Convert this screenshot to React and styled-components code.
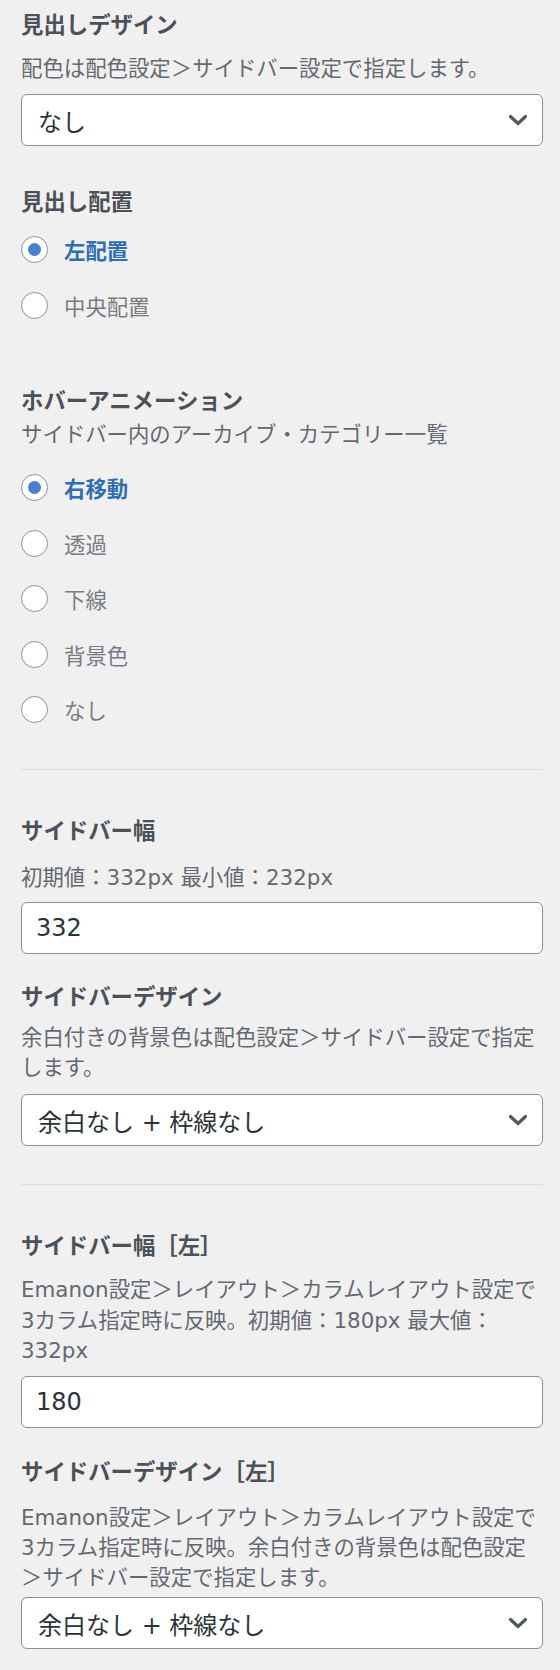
import React from "react";
import styled, { createGlobalStyle } from "styled-components";

const GlobalStyle = createGlobalStyle`
  html, body {
    margin: 0;
    padding: 0;
    background: #f0f0f1;
  }
  body {
    font-family: "DejaVu Sans", "Noto Sans CJK JP", sans-serif;
    color: #50575e;
  }
`;

const Panel = styled.div`
  width: 560px;
  box-sizing: border-box;
  padding: 10px 17px 20px 21px;
  display: flex;
  flex-direction: column;
`;

const Title = styled.div`
  margin-top: ${(p) => p.$mt || 0}px;
  font-size: 22.4px;
  line-height: 30px;
  font-weight: 700;
  color: #4b5157;
`;

const Desc = styled.div`
  margin-top: ${(p) => p.$mt || 0}px;
  font-size: 21.4px;
  line-height: ${(p) => p.$lh || 30}px;
  color: #646970;
`;

const Field = styled.div`
  margin-top: ${(p) => p.$mt || 0}px;
  height: 52px;
  box-sizing: border-box;
  display: flex;
  align-items: center;
  justify-content: space-between;
  padding: 0 14px 0 ${(p) => (p.$select ? 16 : 14)}px;
  background: #fff;
  border: 1.4px solid #8c8f94;
  border-radius: 6px;
  font-size: 24px;
  color: #2c3338;
`;

const Chevron = () => (
  <svg width="20" height="12" viewBox="0 0 20 12">
    <polyline
      points="2.5,2.5 10,9.5 17.5,2.5"
      fill="none"
      stroke="#50575e"
      strokeWidth="3.2"
      strokeLinecap="round"
      strokeLinejoin="round"
    />
  </svg>
);

const RadioList = styled.div`
  margin-top: ${(p) => p.$mt || 0}px;
  display: flex;
  flex-direction: column;
`;

const RadioRow = styled.div`
  height: ${(p) => p.$h}px;
  display: flex;
  align-items: center;
  gap: 16px;
  font-size: 21.4px;
  color: ${(p) => (p.$checked ? "#2f6db5" : "#787c82")};
  font-weight: ${(p) => (p.$checked ? 700 : 400)};
`;

const Circle = styled.span`
  width: 27px;
  height: 27px;
  box-sizing: border-box;
  border-radius: 50%;
  border: 1.4px solid #8c8f94;
  background: #fff;
  display: flex;
  align-items: center;
  justify-content: center;
  flex: none;
  &::after {
    content: "";
    display: ${(p) => (p.$checked ? "block" : "none")};
    width: 13px;
    height: 13px;
    border-radius: 50%;
    background: #4582c7;
  }
`;

const Divider = styled.hr`
  margin: ${(p) => p.$mt || 0}px 0 0;
  border: none;
  height: 1px;
  background: #dcdcde;
`;

const Radios = ({ items, checked, mt, h }) => (
  <RadioList $mt={mt}>
    {items.map((label) => (
      <RadioRow key={label} $h={h} $checked={label === checked}>
        <Circle $checked={label === checked} />
        {label}
      </RadioRow>
    ))}
  </RadioList>
);

const Select = ({ value, mt }) => (
  <Field $select $mt={mt}>
    <span>{value}</span>
    <Chevron />
  </Field>
);

export default function App() {
  return (
    <>
      <GlobalStyle />
      <Panel>
        <Title>見出しデザイン</Title>
        <Desc $mt={14}>配色は配色設定＞サイドバー設定で指定します。</Desc>
        <Select value="なし" mt={10} />

        <Title $mt={41}>見出し配置</Title>
        <Radios items={["左配置", "中央配置"]} checked="左配置" mt={4} h={56} />

        <Title $mt={53}>ホバーアニメーション</Title>
        <Desc $mt={4}>サイドバー内のアーカイブ・カテゴリー一覧</Desc>
        <Radios
          items={["右移動", "透過", "下線", "背景色", "なし"]}
          checked="右移動"
          mt={10}
          h={55.5}
        />

        <Divider $mt={31.5} />

        <Title $mt={46}>サイドバー幅</Title>
        <Desc $mt={17}>初期値：332px 最小値：232px</Desc>
        <Field $mt={9}>332</Field>

        <Title $mt={27.5}>サイドバーデザイン</Title>
        <Desc $mt={11.5}>
          余白付きの背景色は配色設定＞サイドバー設定で指定します。
        </Desc>
        <Select value="余白なし + 枠線なし" mt={11} />

        <Divider $mt={38} />

        <Title $mt={46}>サイドバー幅［左］</Title>
        <Desc $mt={14} $lh={30.5}>
          Emanon設定＞レイアウト＞カラムレイアウト設定で3カラム指定時に反映。初期値：180px 最大値：332px
        </Desc>
        <Field $mt={9.5}>180</Field>

        <Title $mt={29}>サイドバーデザイン［左］</Title>
        <Desc $mt={16}>
          Emanon設定＞レイアウト＞カラムレイアウト設定で3カラム指定時に反映。余白付きの背景色は配色設定＞サイドバー設定で指定します。
        </Desc>
        <Select value="余白なし + 枠線なし" mt={4} />
      </Panel>
    </>
  );
}
